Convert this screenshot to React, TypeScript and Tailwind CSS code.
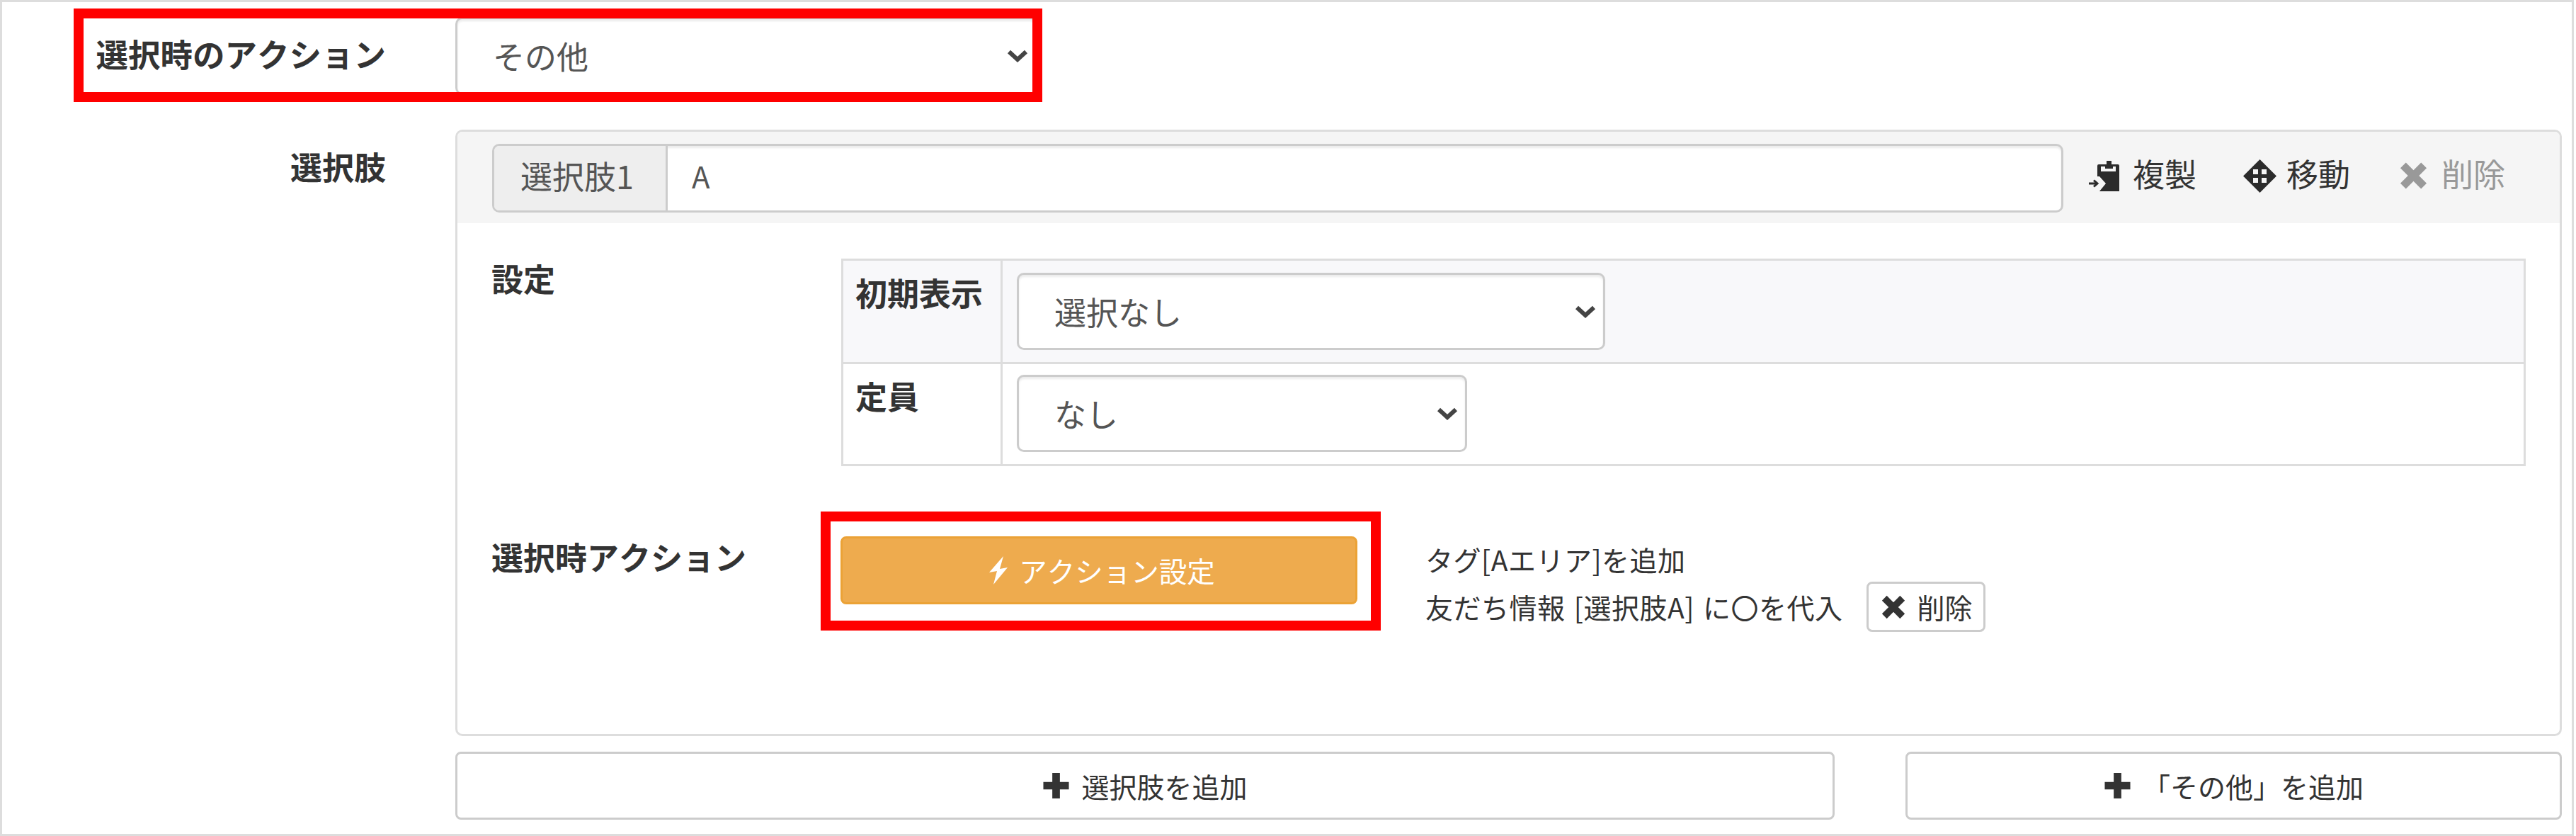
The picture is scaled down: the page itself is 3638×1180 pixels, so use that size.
function Chevron() {
  return (
    <svg
      viewBox="0 0 30 18"
      className="absolute right-[13px] top-1/2 h-[18px] w-[30px] -translate-y-1/2 pointer-events-none"
    >
      <path d="M3 3 L15 14 L27 3" fill="none" stroke="#444" strokeWidth="6" />
    </svg>
  );
}

function SelectBox({ value, className }: { value: string; className: string }) {
  return (
    <div className={`relative ${className}`}>
      <select
        defaultValue={value}
        className="w-full h-full appearance-none bg-white border-[3px] border-[#ccc] rounded-[10px] pl-[50px] pr-[50px] text-[45px] text-[#555] shadow-[inset_0_3px_3px_rgba(0,0,0,0.08)] outline-none"
      >
        <option>{value}</option>
      </select>
      <Chevron />
    </div>
  );
}

function PlusIcon() {
  return (
    <svg viewBox="0 0 39 39" className="w-[39px] h-[38px] shrink-0">
      <path d="M14 1h11v13h13v11H25v13H14V25H1V14h13z" fill="#333" />
    </svg>
  );
}

function RemoveIcon({ color, className }: { color: string; className: string }) {
  return (
    <svg viewBox="0 0 40 40" className={`shrink-0 ${className}`}>
      <path d="M9 1 L20 12 L31 1 L39 9 L28 20 L39 31 L31 39 L20 28 L9 39 L1 31 L12 20 L1 9 Z" fill={color} />
    </svg>
  );
}

function CopyIcon() {
  return (
    <svg viewBox="0 0 43 43" className="w-[43px] h-[43px] shrink-0">
      <path
        fillRule="evenodd"
        d="M14 5 H25 V0 H32 V5 H41 Q43 5 43 7 V43 H15 L24 32 L15 22 H12 V7 Q12 5 14 5 Z M17 8 V15 H38 V8 H34 V11 H23 V8 Z"
        fill="#2b2b2b"
      />
      <path d="M0 32 H10 M7 27.5 L12 32 L7 36.5" fill="none" stroke="#2b2b2b" strokeWidth="3" />
    </svg>
  );
}

function MoveIcon() {
  return (
    <svg viewBox="0 0 47 47" className="w-[47px] h-[47px] shrink-0">
      <path
        fillRule="evenodd"
        d="M23.5 0 L47 23.5 L23.5 47 L0 23.5 Z M14 14 V21 H21 V14 Z M26 14 V21 H33 V14 Z M14 26 V33 H21 V26 Z M26 26 V33 H33 V26 Z"
        fill="#2b2b2b"
      />
    </svg>
  );
}

function FlashIcon() {
  return (
    <svg viewBox="0 0 27 40" className="w-[27px] h-[40px] shrink-0">
      <path d="M21 0 L1 23 L12 21 L7 40 L27 16 L16 18 Z" fill="#fff" />
    </svg>
  );
}

export default function App() {
  return (
    <div className="relative h-[1180px] w-full bg-white pr-[3px] font-['Noto_Sans_CJK_JP',sans-serif] [font-kerning:none] text-[#333]">
      <div className="h-full border-[3px] border-[#ddd] pt-[21px]">
        {/* 選択時のアクション */}
        <div className="flex items-start">
          <div className="w-[640px] shrink-0 pr-[98px] pt-[29px] text-right text-[45.5px] leading-[45px] font-bold">
            選択時のアクション
          </div>
          <SelectBox value="その他" className="w-[822px] h-[110px]" />
        </div>

        {/* 選択肢 */}
        <div className="flex items-start mt-[49px]">
          <div className="w-[640px] shrink-0 pr-[98px] pt-[29px] text-right text-[45px] leading-[45px] font-bold">
            選択肢
          </div>
          <div className="w-[2975px] shrink-0">
            <div className="h-[856px] border-[3px] border-[#ddd] rounded-[10px] overflow-hidden">
              {/* header */}
              <div className="flex items-start h-[129px] bg-[#f5f5f5] pl-[49px] pt-[17px]">
                <div className="flex w-[2219px] h-[97px] border-[3px] border-[#ccc] rounded-[10px] overflow-hidden bg-white shadow-[inset_0_3px_3px_rgba(0,0,0,0.08)]">
                  <div className="flex items-center w-[245px] bg-[#eee] border-r-[3px] border-[#ccc] pl-[37px] pb-[8px] text-[45px] text-[#555]">
                    選択肢1
                  </div>
                  <div className="flex items-center pl-[34px] pb-[8px] text-[42px] text-[#555]">A</div>
                </div>
                <div className="flex items-center h-[90px] text-[45px] leading-none ml-[36px]">
                  <CopyIcon />
                  <span className="ml-[19px] pb-[8px]">複製</span>
                  <span className="ml-[66px]">
                    <MoveIcon />
                  </span>
                  <span className="ml-[14px] pb-[8px]">移動</span>
                  <span className="ml-[70px]">
                    <RemoveIcon color="#999" className="w-[39px] h-[40px]" />
                  </span>
                  <span className="ml-[20px] pb-[8px] text-[#999]">削除</span>
                </div>
              </div>

              {/* 設定 */}
              <div className="flex items-start pl-[48px] pt-[50px]">
                <div className="w-[494px] shrink-0 pt-[5px] text-[45px] leading-[45px] font-bold">設定</div>
                <div className="w-[2379px] shrink-0 border-[3px] border-[#ddd]">
                  <div className="flex h-[146px] bg-[#f8f8fa] border-b-[3px] border-[#ddd]">
                    <div className="w-[225px] shrink-0 border-r-[3px] border-[#ddd] pl-[17px] pt-[22px] text-[45px] leading-[45px] font-bold">
                      初期表示
                    </div>
                    <div className="pl-[20px] pt-[17px]">
                      <SelectBox value="選択なし" className="w-[831px] h-[109px]" />
                    </div>
                  </div>
                  <div className="flex h-[141px]">
                    <div className="w-[225px] shrink-0 border-r-[3px] border-[#ddd] pl-[17px] pt-[22px] text-[45px] leading-[45px] font-bold">
                      定員
                    </div>
                    <div className="pl-[20px] pt-[15px]">
                      <SelectBox value="なし" className="w-[636px] h-[109px]" />
                    </div>
                  </div>
                </div>
              </div>

              {/* 選択時アクション */}
              <div className="flex items-start pl-[48px] pt-[99px]">
                <div className="w-[493px] shrink-0 pt-[6px] text-[45px] leading-[45px] font-bold">
                  選択時アクション
                </div>
                <button className="flex items-center justify-center gap-[16px] w-[730px] h-[96px] pl-[8px] bg-[#eeab4e] border-[3px] border-[#eba236] rounded-[8px] text-white text-[39.5px]">
                  <FlashIcon />
                  アクション設定
                </button>
                <div className="ml-[96px] pt-[4px] text-[39px] leading-[57px] tracking-[0.5px] [word-spacing:3px]">
                  <div>タグ[Aエリア]を追加</div>
                  <div className="flex items-center mt-[3px]">
                    <span>友だち情報 [選択肢A] に〇を代入</span>
                    <button className="flex items-center ml-[33px] w-[168px] h-[71px] pl-[17px] border-[3px] border-[#ccc] rounded-[8px] bg-white text-[39px] tracking-normal">
                      <RemoveIcon color="#333" className="w-[36px] h-[34px]" />
                      <span className="ml-[16px]">削除</span>
                    </button>
                  </div>
                </div>
              </div>
            </div>

            {/* 追加ボタン */}
            <div className="flex gap-[100px] mt-[22px]">
              <button className="flex items-center justify-center gap-[16px] w-[1948px] h-[96px] border-[3px] border-[#ccc] rounded-[8px] bg-white text-[39px]">
                <PlusIcon />
                選択肢を追加
              </button>
              <button className="flex items-center justify-center gap-[16px] w-[927px] h-[96px] border-[3px] border-[#ccc] rounded-[8px] bg-white text-[39px]">
                <PlusIcon />
                「その他」を追加
              </button>
            </div>
          </div>
        </div>
      </div>

      {/* 赤枠 */}
      <div className="absolute left-[104px] top-[12px] w-[1368px] h-[132px] border-[14px] border-[#ff0000]" />
      <div className="absolute left-[1159px] top-[722px] w-[791px] h-[168px] border-[14px] border-[#ff0000]" />
    </div>
  );
}
